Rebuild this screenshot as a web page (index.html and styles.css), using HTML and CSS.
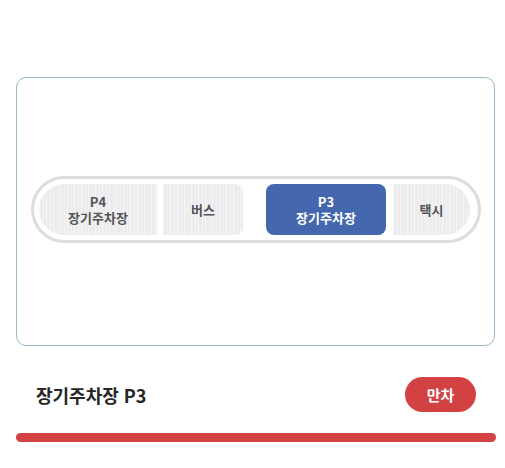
FILE: index.html
```html
<!DOCTYPE html>
<html lang="ko">
<head>
<meta charset="utf-8">
<link rel="stylesheet" href="styles.css">
</head>
<body>
<div class="page">
  <div class="card">
    <div class="pill">
      <div class="seg seg-first"><span class="line">P4</span><span class="line">장기주차장</span></div>
      <div class="seg seg-bus"><span class="line">버스</span></div>
      <div class="seg seg-active"><span class="line">P3</span><span class="line">장기주차장</span></div>
      <div class="seg seg-last"><span class="line">택시</span></div>
    </div>
  </div>
  <div class="status">
    <div class="title">장기주차장 P3</div>
    <div class="badge">만차</div>
  </div>
  <div class="bar"></div>
</div>
</body>
</html>
```

FILE: styles.css
```css
html, body {
  margin: 0;
  padding: 0;
  background: #ffffff;
  font-family: "Noto Sans CJK KR", "Noto Sans", sans-serif;
}
.page {
  width: 480px;
  padding: 77px 0 0 16px;
}
.card {
  box-sizing: border-box;
  width: 479px;
  height: 269px;
  border: 1px solid #9db8c8;
  border-radius: 10px;
  display: flex;
  align-items: center;
  padding: 0 0 4px 14px;
}
.pill {
  box-sizing: border-box;
  width: 450px;
  height: 67px;
  border: 3px solid #dddde0;
  border-radius: 34px;
  display: flex;
  align-items: center;
  padding: 0 8px 0 5px;
}
.seg {
  box-sizing: border-box;
  height: 51px;
  display: flex;
  flex-direction: column;
  align-items: center;
  justify-content: center;
  text-align: center;
  font-size: 13px;
  font-weight: 700;
  color: #555558;
  background-color: #ececee;
  background-image: repeating-linear-gradient(90deg, rgba(255,255,255,0.55) 0 1px, rgba(255,255,255,0) 1px 4px, rgba(255,255,255,0.35) 4px 5px, rgba(255,255,255,0) 5px 7px);
}
.line {
  display: block;
  line-height: 16px;
  height: 16px;
}
.seg-first {
  width: 118px;
  border-radius: 26px 0 0 26px;
  margin-right: 6px;
}
.seg-bus {
  width: 80px;
  border-radius: 0 8px 8px 0;
  margin-right: 23px;
}
.seg-active {
  width: 120px;
  background: #4467ae;
  color: #ffffff;
  border-radius: 8px;
  margin-right: 7px;
}
.seg-last {
  width: 77px;
  border-radius: 0 26px 26px 0;
}
.status {
  width: 460px;
  margin-top: 31px;
  padding-left: 20px;
  box-sizing: border-box;
  display: flex;
  align-items: center;
  justify-content: space-between;
  height: 35px;
}
.title {
  font-size: 18px;
  font-weight: 700;
  color: #262626;
}
.badge {
  width: 71px;
  height: 35px;
  border-radius: 18px;
  background: #d34242;
  color: #ffffff;
  font-size: 15px;
  font-weight: 700;
  display: flex;
  align-items: center;
  justify-content: center;
}
.bar {
  width: 480px;
  height: 9px;
  margin-top: 21px;
  border-radius: 5px;
  background: #d44242;
}
```
